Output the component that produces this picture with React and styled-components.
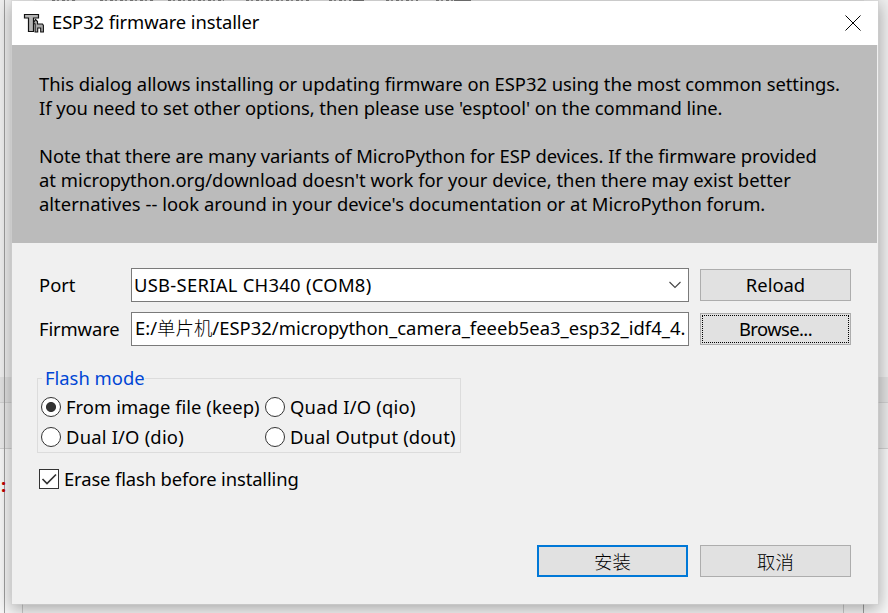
import React from "react";
import styled, { createGlobalStyle } from "styled-components";

const Global = createGlobalStyle`
  *, *::before, *::after { box-sizing: border-box; }
  html, body, #root { height: 100%; }
  body {
    margin: 0; overflow: hidden; color: #000;
    font: 18.4px/24px "Noto Sans", "Noto Sans CJK SC", sans-serif;
  }
`;

const Desktop = styled.div`
  position: relative;
  width: 888px;
  height: 613px;
  overflow: hidden;
  padding: 1px 10px 9px 12px;
  background: #f0f0f0;
`;

/* Parts of the editor window that stay visible around the dialog */
const Backdrop = styled.div`
  position: absolute;
  inset: 0;
  display: grid;
  grid-template-rows: 377px 26px 46px 1fr;
  background: #f0f0f0;
`;
const Strip = styled.div`
  background: ${(p) => p.$bg};
  border-bottom: ${(p) => (p.$line ? "1px solid #d2d2d2" : "0")};
`;
const WindowEdge = styled.div`
  position: absolute;
  left: 4px;
  top: 0;
  width: 860px;
  height: 613px;
  border: solid #a0a0a0;
  border-width: 0 1px;
`;
const Tabs = styled.div`
  position: absolute;
  left: 34px;
  top: 0;
  height: 1px;
  width: 830px;
  overflow: hidden;
  background: #ddd;
  display: flex;
`;
const TabMark = styled.i`
  flex: none;
  width: ${(p) => p.$w}px;
  margin-left: ${(p) => p.$gap}px;
  background: ${(p) =>
    p.$solid ? "#000" : "repeating-linear-gradient(90deg, #111 0 3px, #ccc 3px 5px, #333 5px 7px, #ddd 7px 10px)"};
`;
const Prompt = styled.div`
  position: absolute;
  left: 1px;
  top: 473px;
  width: 5px;
  color: #c00000;
  font-weight: 700;
`;
const LowerPane = styled.div`
  position: absolute;
  left: 22px;
  top: 600px;
  width: 822px;
  height: 14px;
  border: 1px solid #ccc;
`;

const Dialog = styled.section`
  position: relative;
  width: 866px;
  height: 603px;
  display: flex;
  flex-direction: column;
  background: #f0f0f0;
  box-shadow: 0 0 0 1px rgba(210, 210, 210, .5), 0 4px 16px 1px rgba(0, 0, 0, .34);
`;
const TitleBar = styled.header`
  height: 44px;
  display: flex;
  align-items: center;
  padding: 0 17px 0 11px;
  background: #fff;
`;
const Title = styled.h1`
  flex: 1;
  margin: 0 0 2px 8px;
  font: inherit;
`;
const Close = styled.button`
  display: flex;
  border: 0;
  padding: 0;
  margin-top: -1px;
  background: none;
`;
const Notice = styled.div`
  height: 198px;
  width: 865px;
  padding: 27px 0 0 27px;
  background: #bbb;
`;
const Line = styled.p`
  margin: 0;
  height: 24px;
  white-space: nowrap;
`;
const Text = styled.span`
  white-space: nowrap;
  letter-spacing: ${(p) => p.$ls || 0}px;
`;
const Han = styled.span`
  font-family: "Noto Sans CJK SC", sans-serif;
  font-weight: 300;
  line-height: 1;
`;
const Form = styled.div`
  display: grid;
  grid-template-columns: 92px 558px 151px;
  column-gap: 0;
  row-gap: 10px;
  padding: 25px 0 0 27px;
  align-items: center;
`;
const Field = styled.div`
  height: 34px;
  display: flex;
  align-items: center;
  justify-content: space-between;
  overflow: hidden;
  padding: 0 ${(p) => p.$pr}px ${(p) => p.$pb || 0}px ${(p) => p.$pl}px;
  border: 1px solid #7a7a7a;
  background: #fff;
`;
const Button = styled.button`
  width: 151px;
  height: 32px;
  flex: none;
  padding: 0;
  margin-left: ${(p) => p.$ml || 0}px;
  border: ${(p) => (p.$primary ? "2px solid #0078d7" : "1px solid #adadad")};
  background: #e1e1e1;
  color: #000;
  font: inherit;
  display: grid;
  place-items: stretch;
`;
const Face = styled.span`
  display: flex;
  align-items: center;
  justify-content: center;
  margin: 1px;
  border: 1px dotted ${(p) => (p.$focus ? "#000" : "transparent")};
`;
const Group = styled.fieldset`
  width: 424px;
  height: 87px;
  margin: 20px 0 0 25px;
  padding: 0 0 0 3px;
  border: 1px solid #dcdcdc;
  min-width: 0;
`;
const Legend = styled.legend`
  height: 24px;
  margin-left: 1px;
  padding: 0 0 0 3px;
  color: #0046d5;
`;
const Radios = styled.div`
  display: grid;
  grid-template-columns: 224px 1fr;
  grid-auto-rows: 30px;
  margin-top: 2px;
`;
const Option = styled.label`
  display: flex;
  align-items: center;
  gap: 5px;
`;
const Radio = styled.span`
  flex: none;
  width: 20px;
  height: 20px;
  border: 1px solid #333;
  border-radius: 50%;
  background: ${(p) => (p.$on ? "radial-gradient(circle, #333 0 4.6px, #fff 5.4px)" : "#fff")};
`;
const CheckRow = styled(Option)`
  margin: 14px 0 0 27px;
`;
const Box = styled.span`
  display: flex;
  width: 20px;
  height: 20px;
  border: 1px solid #333;
  background: #fff;
`;
const Footer = styled.footer`
  display: flex;
  justify-content: flex-end;
  gap: 12px;
  margin: auto 27px 27px 0;
`;

const Logo = () => (
  <svg width="21" height="20" viewBox="0 0 21 20">
    <path d="M1.500 1.500H15.500V5H10.500V18.500H5.500V5H1.500Z" fill="#b4b4b4" stroke="#111" strokeWidth="1.2" />
    <path d="M10.700 9.500L12.500 6.500L14.500 8.500V11H19.500L20.400 12.500V19H17.700V15H14.700V19H12.100V11L10.700 10.500Z" fill="#a8a8a8" stroke="#111" strokeWidth="1.1" />
  </svg>
);

const notice = [
  ["This dialog allows installing or updating firmware on ESP32 using the most common settings.", -0.033],
  ["If you need to set other options, then please use 'esptool' on the command line.", -0.05],
  ["", 0],
  ["Note that there are many variants of MicroPython for ESP devices. If the firmware provided", -0.055],
  ["at micropython.org/download doesn't work for your device, then there may exist better", -0.01],
  ["alternatives -- look around in your device's documentation or at MicroPython forum.", 0.03],
];
const modes = [
  ["From image file (keep)", 0.05],
  ["Quad I/O (qio)", 0.22],
  ["Dual I/O (dio)", 0.2],
  ["Dual Output (dout)", 0.17],
];
const tabMarks = [
  [18, 24], [24, 54], [14, 56], [22, 63], [20, 22], [2, 11, true], [22, 32], [18, 18], [0, 17, true],
];

export default function App() {
  return (
    <Desktop>
      <Global />
      <Backdrop>
        <Strip $bg="#f0f0f0" />
        <Strip $bg="#e2e2e2" $line />
        <Strip $bg="#ebebeb" $line />
        <Strip $bg="#f8f8f8" />
      </Backdrop>
      <WindowEdge />
      <Tabs>{tabMarks.map(([gap, w, solid], i) => <TabMark key={i} $gap={gap} $w={w} $solid={solid} />)}</Tabs>
      <Prompt>:</Prompt>
      <LowerPane />
      <Dialog>
        <TitleBar>
          <Logo />
          <Title><Text $ls={-0.1}>ESP32 firmware installer</Text></Title>
          <Close aria-label="Close">
            <svg width="16" height="16" viewBox="0 0 16 16"><path d="M.5.5l15 15M15.5.5l-15 15" stroke="#000" strokeWidth="1" /></svg>
          </Close>
        </TitleBar>
        <Notice>{notice.map(([t, ls], i) => <Line key={i}><Text $ls={ls}>{t}</Text></Line>)}</Notice>
        <Form>
          <Text>Port</Text>
          <Field $pl={2} $pr={6}>
            <Text $ls={0.28}>USB-SERIAL CH340 (COM8)</Text>
            <svg width="14" height="8" viewBox="0 0 14 8" fill="none"><path d="M1.500 1L7 6.500 12.500 1" stroke="#444" strokeWidth="1.1" /></svg>
          </Field>
          <Button $ml={11}><Face><Text>Reload</Text></Face></Button>
          <Text $ls={-0.12}>Firmware</Text>
          <Field $pl={3} $pr={0} $pb={2}><Text $ls={0.03}>E:/<Han>单片机</Han>/ESP32/micropython_camera_feeeb5ea3_esp32_idf4_4.</Text></Field>
          <Button $ml={11}><Face $focus><Text $ls={-0.6}>Browse...</Text></Face></Button>
        </Form>
        <Group>
          <Legend><Text>Flash mode</Text></Legend>
          <Radios>
            {modes.map(([t, ls], i) => <Option key={t}><Radio $on={i === 0} /><Text $ls={ls}>{t}</Text></Option>)}
          </Radios>
        </Group>
        <CheckRow>
          <Box><svg width="18" height="18" viewBox="0 0 18 18" fill="none"><path d="M2.500 9L7 13.500 16 4.500" stroke="#333" strokeWidth="1.7" /></svg></Box>
          <Text $ls={-0.13}>Erase flash before installing</Text>
        </CheckRow>
        <Footer>
          <Button $primary><Face><Han>安装</Han></Face></Button>
          <Button><Face><Han>取消</Han></Face></Button>
        </Footer>
      </Dialog>
    </Desktop>
  );
}
